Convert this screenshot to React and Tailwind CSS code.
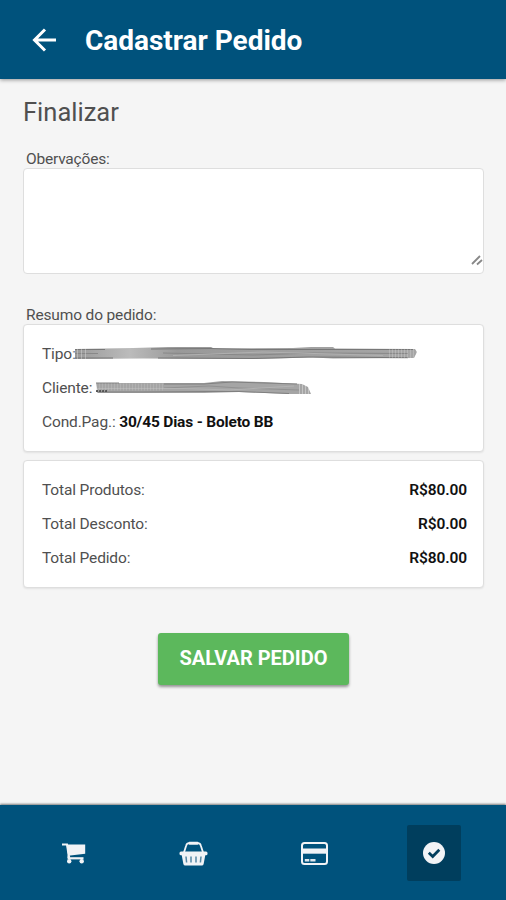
function CartIcon() {
  return (
    <svg width="24" height="21" viewBox="0 0 24 21" fill="none" stroke="#f1f3f6">
      <path d="M0 1.4H5L7 15" strokeWidth="2" />
      <path d="M4.4 1.6H23.2V10.8L6.2 12.8Z" fill="#f1f3f6" stroke="none" />
      <path d="M5.6 15.3H21.5" strokeWidth="2.2" />
      <path d="M6.8 12.5V15" strokeWidth="2.5" />
      <circle cx="7.2" cy="18.2" r="2.2" fill="#f1f3f6" stroke="none" />
      <circle cx="19.7" cy="18.2" r="2.2" fill="#f1f3f6" stroke="none" />
    </svg>
  );
}

function BasketIcon() {
  return (
    <svg width="29" height="25" viewBox="0 0 29 25" fill="none" stroke="#f1f3f6">
      <path d="M4.8 12L7.2 4.5Q7.8 2.2 10 2.2H19Q21.2 2.2 21.8 4.5L24.2 12" strokeWidth="1.8" />
      <rect x="9.5" y=".7" width="10" height="3" rx="1" fill="#f1f3f6" stroke="none" />
      <rect x=".5" y="10.5" width="28" height="3.8" rx="1.5" fill="#f1f3f6" stroke="none" />
      <path d="M2.5 13H26.5L24.6 23Q24.3 24.5 22.8 24.5H6.2Q4.7 24.5 4.4 23Z" fill="#f1f3f6" stroke="none" />
      <path d="M7 15.5L7.6 21.5M12 15.5V21.5M17 15.5V21.5M22 15.5L21.4 21.5" stroke="#5488a5" strokeWidth="1.5" />
    </svg>
  );
}

function CardIcon() {
  return (
    <svg width="27" height="23" viewBox="0 0 27 23" fill="none">
      <rect x="1" y="1" width="25" height="21" rx="2.5" stroke="#f1f3f6" strokeWidth="2" />
      <path d="M2 6.5H25V11.7H2Z" fill="#f1f3f6" />
      <path d="M3.8 18.3H8.3M9.3 18.3H14.5" stroke="#dce5ec" strokeWidth="2.4" />
    </svg>
  );
}

function CheckIcon() {
  return (
    <svg width="22" height="22" viewBox="0 0 22 22" fill="none">
      <circle cx="11" cy="11" r="11" fill="#f1f3f6" />
      <path d="M5.8 10.8L9.7 14.5L16.3 7.7" stroke="#003e5d" strokeWidth="2.8" />
    </svg>
  );
}

function TypeScribble() {
  return (
    <svg className="absolute left-[32px] top-[8px]" width="346" height="16" viewBox="0 0 346 16" fill="none">
      <defs>
        <linearGradient id="typeInk">
          <stop offset="0" stopColor="#999" />
          <stop offset=".08" stopColor="#aaa" />
          <stop offset=".16" stopColor="#bbb" />
          <stop offset=".3" stopColor="#999" />
          <stop offset="1" stopColor="#a6a6a6" />
        </linearGradient>
      </defs>
      <path d="M2 3L60 2L95 1H138L141 2.5L220 2L238 1H260L262 2.5L342 3L344 6L341 12L260 12.5L240 11.5L180 13L70 12.5L2 13Z" fill="url(#typeInk)" />
      <path d="M2 3.5H32M78 3L138 2.5L178 3.5L340 3.5" stroke="#777" />
      <path d="M2 7.5H25M90 7L180 9L240 7L335 7.5" stroke="#888" />
      <path d="M2 12H40M85 12L180 12.5L235 11L335 11.7" stroke="#777" />
      <path d="M100 9.5L190 6L310 9.5" stroke="#b0b0b0" />
      <path d="M316 7.5H345" stroke="#fff" strokeWidth="9" strokeDasharray="1 2" opacity=".2" />
      <path d="M0 7.5H16" stroke="#fff" strokeWidth="11" strokeDasharray="1 3" opacity=".3" />
    </svg>
  );
}

function ClientScribble() {
  return (
    <svg className="absolute left-[53px] top-[7px]" width="220" height="18" viewBox="0 0 220 18" fill="none">
      <path d="M2 4L110 4L128 2L170 3L208 5L214 8L217 15L195 15L145 13L110 14L4 14Z" fill="#a5a5a5" />
      <path d="M2 4H25M70 5L110 5L138 3L203 5" stroke="#808080" />
      <path d="M3 13H50L112 12.5L145 12.5L195 14.5" stroke="#808080" />
      <path d="M70 9L115 7L145 9L205 11" stroke="#919191" />
      <path d="M3 9.5H90L135 11L200 7" stroke="#b3b3b3" />
      <path d="M2 12H13" stroke="#555" strokeWidth="2" strokeDasharray="2 1" />
      <path d="M2 8H70" stroke="#ccc" strokeWidth="7" strokeDasharray="1 2" opacity=".3" />
      <path d="M205 10H218" stroke="#fff" strokeWidth="10" strokeDasharray="1 2" opacity=".35" />
    </svg>
  );
}

function Total({ label, value }) {
  return (
    <div className="flex h-[33.7px] items-center justify-between">
      <span className="tracking-[-0.15px]">{label}</span>
      <b className="font-semibold tracking-[-0.1px] text-[#111]">{value}</b>
    </div>
  );
}

export default function App() {
  return (
    <div className="flex h-[900px] w-[506px] flex-col overflow-hidden bg-[#f5f5f5] font-[Roboto,sans-serif] text-[#505050]">
      <header className="flex h-[79px] shrink-0 items-center bg-[#00527c] pl-[32px] text-white shadow-[0_1px_4px_rgba(0,0,0,0.4)]">
        <svg width="25" height="24" viewBox="0 0 25 24" fill="none" stroke="currentColor" strokeWidth="3">
          <path d="M24 12H3M13 1.5L2.5 12L13 22.5" />
        </svg>
        <h1 className="ml-[28px] whitespace-nowrap pt-[2px] text-[28px] leading-[36px] font-bold tracking-[-0.02px]">Cadastrar Pedido</h1>
      </header>

      <main className="flex flex-1 flex-col pr-[22px] pl-[23px] pt-[17px]">
        <h2 className="h-[32px] text-[25.5px] leading-[32px]">Finalizar</h2>
        <label className="mt-[21px] h-[20px] pl-[3px] text-[15.5px] leading-[20px] tracking-[-0.2px]">Obervações:</label>
        <div className="mt-[-1px] flex h-[106px] shrink-0 items-end justify-end rounded-[4px] border-[1.5px] border-[#dedede] bg-white pb-[7px]">
          <svg width="12" height="12" viewBox="0 0 12 12" stroke="#888" strokeWidth="1.8">
            <path d="M1 10L9 2M6 10.5L11 6" />
          </svg>
        </div>
        <p className="mt-[31px] h-[20px] pl-[3px] text-[15.5px] leading-[20px] tracking-[-0.15px]">Resumo do pedido:</p>

        <section className="mt-[-1px] h-[128px] shrink-0 rounded-[4px] border border-[#dedede] bg-white px-[17px] pt-[13px] text-[15.5px] tracking-[-0.15px] shadow-[0_1px_2px_rgba(0,0,0,0.08)]">
          <div className="relative flex h-[33.7px] items-center pl-px">Tipo:<TypeScribble /></div>
          <div className="relative flex h-[33.7px] items-center pl-px">Cliente:<ClientScribble /></div>
          <div className="flex h-[33.7px] items-center pl-px whitespace-pre">Cond.Pag.: <b className="font-bold tracking-[-0.18px] text-[#111]">30/45 Dias - Boleto BB</b></div>
        </section>

        <section className="mt-[8px] h-[128px] shrink-0 rounded-[4px] border border-[#dedede] bg-white pr-[16px] pl-[18px] pt-[13px] text-[15.5px] tracking-[-0.1px] shadow-[0_1px_2px_rgba(0,0,0,0.08)]">
          <Total label="Total Produtos:" value="R$80.00" />
          <Total label="Total Desconto:" value="R$0.00" />
          <Total label="Total Pedido:" value="R$80.00" />
        </section>

        <button className="mt-[45px] ml-[135px] flex h-[52px] w-[191px] items-center justify-center rounded-[3px] bg-[#5cb85c] pb-[3px] text-[20px] font-bold tracking-[0px] whitespace-nowrap text-white shadow-[0_2px_3px_rgba(0,0,0,0.4)]">SALVAR PEDIDO</button>
      </main>

      <nav className="grid h-[95px] shrink-0 grid-cols-[120px_120px_120px_120px] items-center bg-[#00527c] pl-[13px] shadow-[0_-1px_2px_rgba(0,0,0,0.5)]">
        <div className="flex justify-center pt-[2px] pl-[2px]"><CartIcon /></div>
        <div className="flex justify-center pt-px"><BasketIcon /></div>
        <div className="flex justify-center pl-[2px] pt-px"><CardIcon /></div>
        <div className="flex justify-center pl-px">
          <div className="flex h-[56px] w-[54px] items-center justify-center rounded-[2px] bg-[#003e5d]"><CheckIcon /></div>
        </div>
      </nav>
    </div>
  );
}
